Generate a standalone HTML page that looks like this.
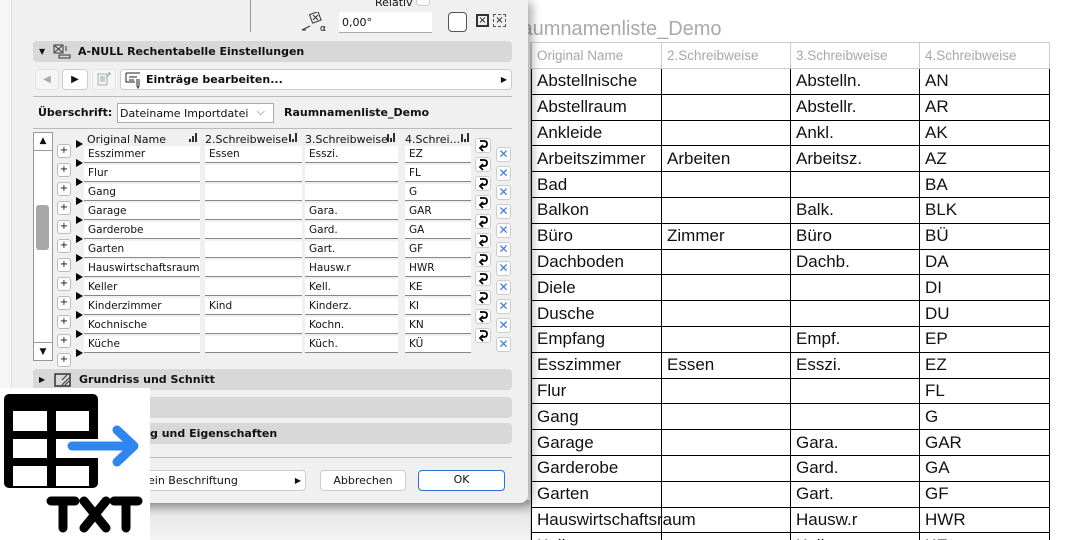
<!DOCTYPE html>
<html><head><meta charset="utf-8"><style>
*{box-sizing:border-box;margin:0;padding:0}
html,body{width:1068px;height:540px;overflow:hidden}
body{background:#fff;position:relative;font-family:"Liberation Sans",sans-serif}
.a{position:absolute}
.dlg{left:0;top:0;width:528px;height:503px;background:#f0f0f0;border-bottom-right-radius:8px;box-shadow:4px 2px 10px rgba(0,0,0,.35);z-index:2;font-family:"DejaVu Sans","Liberation Sans",sans-serif;font-size:11px;color:#111}
.sec{left:33px;width:479px;height:21px;background:#d8d8d8;border-radius:4px;font-weight:bold;font-size:11px;line-height:21px}
.btn{background:#fff;border:1px solid #ccc;border-radius:4px}
.cell{background:#fff;height:17px;border-bottom:1px solid #888;line-height:17px;padding-left:4px;font-size:10.5px;white-space:nowrap;overflow:hidden}
.plus{left:57px;width:14px;height:14px;border:1px solid #bbb;border-radius:3px;background:#fff;font-size:10px;line-height:12px;text-align:center}
.tri{left:76px;width:0;height:0;border-left:7px solid #000;border-top:4px solid transparent;border-bottom:4px solid transparent}
.sw{left:475px;width:16px;height:15px;border:1px solid #ccc;border-radius:3px;background:#fff}
.xb{left:496px;width:15px;height:15px;border:1px solid #ccc;border-radius:3px;background:#fff;color:#3a7bd5;font-size:12px;line-height:13px;text-align:center}
table{border-collapse:collapse;table-layout:fixed}
td{white-space:nowrap;overflow:visible;padding-left:5px;font-size:17px;height:25.8px;border:1px solid #000;color:#111}
tr.h td{font-size:13.5px;color:#a8a8a8;border-color:#ccc;height:26px}
</style></head><body>
<div class="a" style="left:507px;top:18px;font-size:20px;color:#a9a9a9">Raumnamenliste_Demo</div>
<div class="a" style="left:506px;top:42px;width:25px;height:498px;border-right:1px solid #ccc"></div>
<div class="a" style="left:512px;top:509px;font-size:14px;color:#aaa">18</div>
<table class="a" style="left:531px;top:42px;width:518px">
<colgroup><col style="width:130px"><col style="width:129px"><col style="width:129px"><col style="width:130px"></colgroup>
<tr class="h"><td>Original Name</td><td>2.Schreibweise</td><td>3.Schreibweise</td><td>4.Schreibweise</td></tr>
<tr><td>Abstellnische</td><td></td><td>Abstelln.</td><td>AN</td></tr>
<tr><td>Abstellraum</td><td></td><td>Abstellr.</td><td>AR</td></tr>
<tr><td>Ankleide</td><td></td><td>Ankl.</td><td>AK</td></tr>
<tr><td>Arbeitszimmer</td><td>Arbeiten</td><td>Arbeitsz.</td><td>AZ</td></tr>
<tr><td>Bad</td><td></td><td></td><td>BA</td></tr>
<tr><td>Balkon</td><td></td><td>Balk.</td><td>BLK</td></tr>
<tr><td>Büro</td><td>Zimmer</td><td>Büro</td><td>BÜ</td></tr>
<tr><td>Dachboden</td><td></td><td>Dachb.</td><td>DA</td></tr>
<tr><td>Diele</td><td></td><td></td><td>DI</td></tr>
<tr><td>Dusche</td><td></td><td></td><td>DU</td></tr>
<tr><td>Empfang</td><td></td><td>Empf.</td><td>EP</td></tr>
<tr><td>Esszimmer</td><td>Essen</td><td>Esszi.</td><td>EZ</td></tr>
<tr><td>Flur</td><td></td><td></td><td>FL</td></tr>
<tr><td>Gang</td><td></td><td></td><td>G</td></tr>
<tr><td>Garage</td><td></td><td>Gara.</td><td>GAR</td></tr>
<tr><td>Garderobe</td><td></td><td>Gard.</td><td>GA</td></tr>
<tr><td>Garten</td><td></td><td>Gart.</td><td>GF</td></tr>
<tr><td>Hauswirtschaftsraum</td><td></td><td>Hausw.r</td><td>HWR</td></tr>
<tr><td>Keller</td><td></td><td>Kell.</td><td>KE</td></tr>
</table>
<div class="a" style="left:0;top:500px;width:530px;height:40px;background:linear-gradient(#bbb,#e8e8e8 40%,#f4f4f4)"></div>

<div class="a dlg">
 <div class="a" style="left:0;top:0;width:12px;height:503px;background:#f6f6f6;border-right:1px solid #e0e0e0"></div>
 <div class="a" style="left:250px;top:0;width:1px;height:32px;background:#999"></div>
 <div class="a" style="left:375px;top:-4px;font-size:11px">Relativ</div>
 <div class="a btn" style="left:416px;top:-4px;width:14px;height:10px"></div>
 <svg class="a" style="left:300px;top:12px" width="28" height="20"><rect x="11" y="1" width="9" height="9" fill="none" stroke="#333" transform="rotate(-20 15 6)"/><path d="M13 3l5 5M18 3l-5 5M2 18l8-4M2 18l4 0" stroke="#333" fill="none"/><text x="20" y="19" font-size="9">α</text></svg>
 <div class="a" style="left:339px;top:12px;width:93px;height:21px;background:#fff;border-bottom:1px solid #aaa;padding:4px 3px;font-size:11px">0,00°</div>
 <div class="a" style="left:448px;top:12px;width:19px;height:20px;border:1px solid #555;border-radius:4px;background:#fff"></div>
 <div class="a" style="left:476px;top:14px;width:13px;height:13px;border:2px solid #333;font-size:10px;line-height:9px;text-align:center">×</div>
 <div class="a" style="left:493px;top:14px;width:13px;height:13px;border:1px dashed #555;font-size:10px;line-height:11px;text-align:center">×</div>

 <div class="a sec" style="top:41px"><span style="position:absolute;left:6px;font-size:8px">▼</span><svg style="position:absolute;left:20px;top:3px" width="18" height="15"><rect x="1" y="1" width="9" height="8" fill="none" stroke="#333"/><path d="M2 2l7 6M9 2l-7 6M6 11h11v3H6zM13 2v5" stroke="#333" fill="none"/></svg><span style="position:absolute;left:45px">A-NULL Rechentabelle Einstellungen</span></div>

 <div class="a btn" style="left:35px;top:69px;width:24px;height:21px;border-color:#e2e2e2;background:#f5f5f5;color:#aaa;text-align:center;line-height:20px;font-size:10px">◀</div>
 <div class="a btn" style="left:62px;top:69px;width:26px;height:21px;text-align:center;line-height:20px;font-size:10px">▶</div>
 <div class="a btn" style="left:92px;top:69px;width:24px;height:21px;border-color:#e6e6e6;background:#f5f5f5"><svg width="22" height="19"><rect x="5" y="4" width="9" height="11" fill="none" stroke="#aaa"/><path d="M7 7h5M7 9h5M7 11h5M13 8l4-5M15 3h2v2" stroke="#8ab" fill="none"/></svg></div>
 <div class="a btn" style="left:120px;top:69px;width:392px;height:21px;font-weight:bold;line-height:19px;padding-left:25px"><svg style="position:absolute;left:4px;top:1px" width="18" height="18"><path d="M1 2h14M1 2v9h9M4 6h8M4 9h5M12 8v7l1 2 1-2V8" stroke="#222" fill="none"/></svg>Einträge bearbeiten...<span style="position:absolute;right:4px;font-size:8px">▶</span></div>
 <div class="a" style="left:33px;top:96px;width:479px;height:1px;background:#bbb"></div>
 <div class="a" style="left:38px;top:106px;font-weight:bold">Überschrift:</div>
 <div class="a" style="left:117px;top:103px;width:157px;height:20px;background:#fff;border:1px solid #aaa;padding:3px 2px">Dateiname Importdatei<span style="position:absolute;right:8px;top:1px;color:#666">⌵</span></div>
 <div class="a" style="left:284px;top:106px;font-weight:bold">Raumnamenliste_Demo</div>
 <div class="a" style="left:33px;top:128px;width:479px;height:1px;background:#bbb"></div>

 <div class="a" style="left:33px;top:132px;width:20px;height:229px;background:#fff;border:1px solid #999"></div>
 <div class="a" style="left:34px;top:133px;width:18px;height:18px;border-bottom:1px solid #999;text-align:center;font-size:9px;line-height:16px">▲</div>
 <div class="a" style="left:36px;top:205px;width:13px;height:45px;background:#a8a8a8;border-radius:3px"></div>
 <div class="a" style="left:34px;top:342px;width:18px;height:18px;border-top:1px solid #999;text-align:center;font-size:9px;line-height:18px">▼</div>

 <div class="a" style="left:87px;top:133px">Original Name</div>
 <div class="a" style="left:205px;top:133px">2.Schreibweise</div>
 <div class="a" style="left:305px;top:133px">3.Schreibweise</div>
 <div class="a" style="left:405px;top:133px">4.Schrei...</div>
 <svg class="a" style="left:189px;top:133px" width="9" height="10"><path d="M1 9V6M4 9V3M7 9V0" stroke="#000" stroke-width="1.6"/></svg>
 <svg class="a" style="left:289px;top:133px" width="9" height="10"><path d="M1 9V1M4 9V6M7 9V0" stroke="#000" stroke-width="1.6"/></svg>
 <svg class="a" style="left:387px;top:133px" width="9" height="10"><path d="M1 9V1M4 9V5M7 9V0" stroke="#000" stroke-width="1.6"/></svg>
 <svg class="a" style="left:461px;top:133px" width="9" height="10"><path d="M1 9V1M4 9V6M7 9V0" stroke="#000" stroke-width="1.6"/></svg>

 <div id="rows"></div>

 <div class="a sec" style="top:369px"><span style="position:absolute;left:6px;font-size:8px">▶</span><svg style="position:absolute;left:21px;top:3px" width="18" height="16"><rect x="1" y="2" width="15" height="12" fill="none" stroke="#333" stroke-width="1.5"/><path d="M8 13l7-7M11 13l4-4M8 8l5-5" stroke="#333"/></svg><span style="position:absolute;left:46px">Grundriss und Schnitt</span></div>
 <div class="a sec" style="top:397px"></div>
 <div class="a sec" style="top:423px"><span style="position:absolute;left:117px">g und Eigenschaften</span></div>
 <div class="a" style="left:33px;top:457px;width:479px;height:1px;background:#bbb"></div>
 <div class="a btn" style="left:120px;top:470px;width:186px;height:21px;line-height:19px;padding-left:27px">ein Beschriftung<span style="position:absolute;right:4px;font-size:8px">▶</span></div>
 <div class="a btn" style="left:320px;top:470px;width:86px;height:21px;line-height:19px;text-align:center">Abbrechen</div>
 <div class="a btn" style="left:418px;top:470px;width:87px;height:21px;line-height:18px;text-align:center;border:1.5px solid #2a6fd6">OK</div>
</div>

<div class="a" style="left:0;top:388px;width:150px;height:152px;background:#fff;z-index:3">
 <svg width="150" height="152">
  <rect x="4" y="6" width="94" height="94" rx="5" fill="#000"/>
  <rect x="13" y="23" width="34" height="20" fill="#fff"/><rect x="56" y="23" width="33" height="20" fill="#fff"/>
  <rect x="13" y="51" width="34" height="19" fill="#fff"/><rect x="56" y="51" width="42" height="19" fill="#fff"/>
  <rect x="13" y="78" width="34" height="20" fill="#fff"/><rect x="56" y="78" width="33" height="20" fill="#fff"/>
  <path d="M72 58H132M117 42L134 58L117 74" stroke="#2f86f0" stroke-width="9" fill="none" stroke-linecap="round" stroke-linejoin="round"/>
  <g stroke="#000" stroke-width="9" stroke-linecap="round" fill="none">
   <path d="M51 113H75M63 113V140"/>
   <path d="M84 113L106 140M106 113L84 140"/>
   <path d="M114 113H138M126 113V140"/>
  </g>
 </svg>
</div>

<script>
var d=[["Esszimmer","Essen","Esszi.","EZ"],["Flur","","","FL"],["Gang","","","G"],["Garage","","Gara.","GAR"],["Garderobe","","Gard.","GA"],["Garten","","Gart.","GF"],["Hauswirtschaftsraum","","Hausw.r","HWR"],["Keller","","Kell.","KE"],["Kinderzimmer","Kind","Kinderz.","KI"],["Kochnische","","Kochn.","KN"],["Küche","","Küch.","KÜ"]];
var xs=[[84,116],[205,97],[305,93],[405,66]],h="";
for(var i=0;i<12;i++){var y=144+i*19;h+='<div class="a plus" style="top:'+(y)+'px">+</div><div class="a tri" style="top:'+(y-4)+'px"></div>';}
for(var i=0;i<11;i++){var y=146+i*19;for(var j=0;j<4;j++)h+='<div class="a cell" style="left:'+xs[j][0]+'px;top:'+y+'px;width:'+xs[j][1]+'px">'+d[i][j]+'</div>';
h+='<div class="a sw" style="top:'+(138+i*19)+'px"><svg width="14" height="13"><path d="M4 2h4q3 0 3 3t-3 3H5M7 6L4 9l3 3" stroke="#000" stroke-width="1.8" fill="none"/></svg></div><div class="a xb" style="top:'+(147+i*19)+'px">✕</div>';}
document.getElementById('rows').innerHTML=h;
</script>
</body></html>
